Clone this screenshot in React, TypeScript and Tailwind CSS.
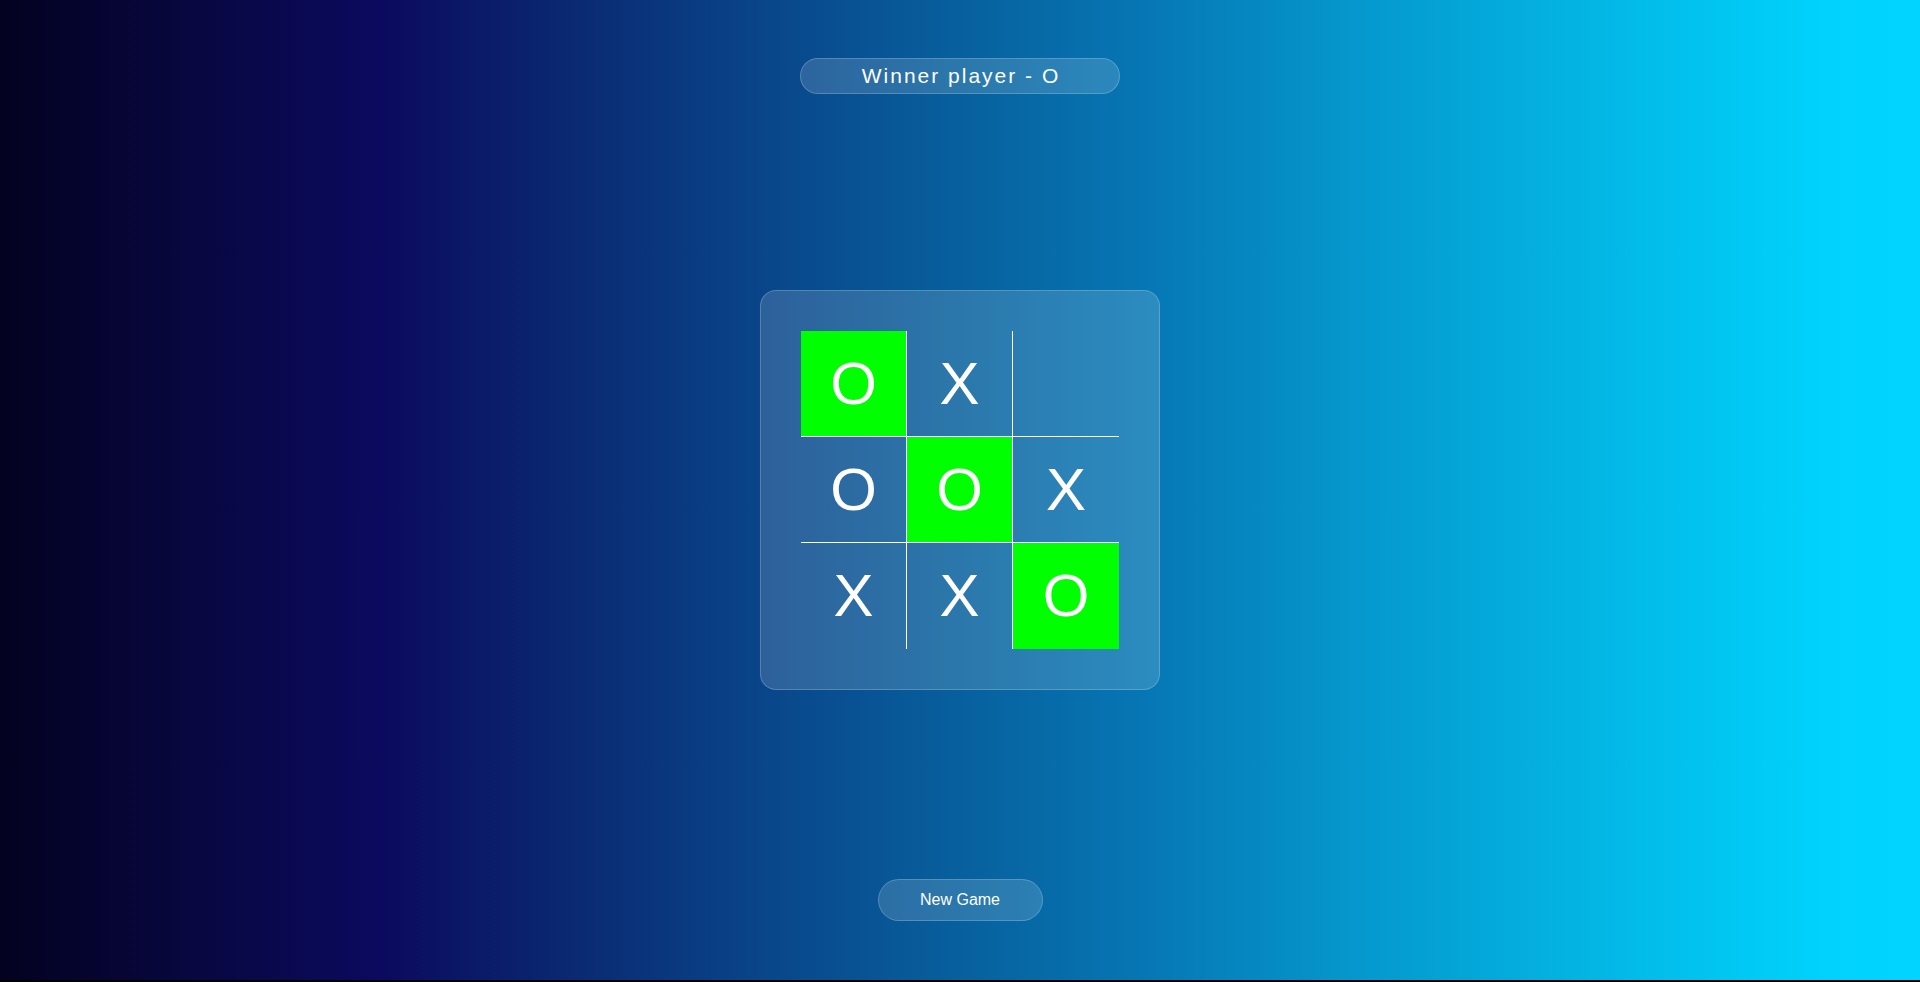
import React from "react";

const cells: { v: string; win: boolean }[] = [
  { v: "O", win: true },
  { v: "X", win: false },
  { v: "", win: false },
  { v: "O", win: false },
  { v: "O", win: true },
  { v: "X", win: false },
  { v: "X", win: false },
  { v: "X", win: false },
  { v: "O", win: true },
];

const borderCls = [
  "border-r border-b",
  "border-r border-b",
  "border-b",
  "border-r border-b",
  "border-r border-b",
  "border-b",
  "border-r",
  "border-r",
  "",
];

export default function App() {
  return (
    <div className="h-[982px] w-full bg-black" style={{ fontFamily: '"Liberation Sans", Arial, sans-serif' }}>
      <div className="h-[980px] w-full flex flex-col items-center bg-[linear-gradient(90deg,#030220_0%,#080740_10%,#0b0a5f_20%,#0a2a73_30%,#09468a_40%,#07609d_50%,#0678b5_60%,#0596cc_70%,#03b6e4_83%,#00d2fd_95%,#00d4ff_100%)]">
        <div className="mt-[58px] w-[320px] h-[36px] rounded-full border border-white/20 bg-white/15 flex items-center justify-center text-white text-[21px] tracking-[2px] pl-[2px]">
          Winner player - O
        </div>
        <div className="mt-[196px] w-[400px] h-[400px] rounded-2xl border border-white/20 bg-white/15 p-[40px]">
          <div className="grid grid-cols-[repeat(3,106px)] grid-rows-[repeat(3,106px)]">
            {cells.map((c, i) => (
              <div
                key={i}
                className={`${borderCls[i]} border-white flex items-center justify-center text-white text-[60px] leading-none ${c.win ? "bg-[#00ff00]" : ""}`}
              >
                {c.v}
              </div>
            ))}
          </div>
        </div>
        <button className="mt-[189px] w-[165px] h-[42px] rounded-full border border-white/20 bg-white/15 text-white text-[16px] flex items-center justify-center">
          New Game
        </button>
      </div>
    </div>
  );
}
